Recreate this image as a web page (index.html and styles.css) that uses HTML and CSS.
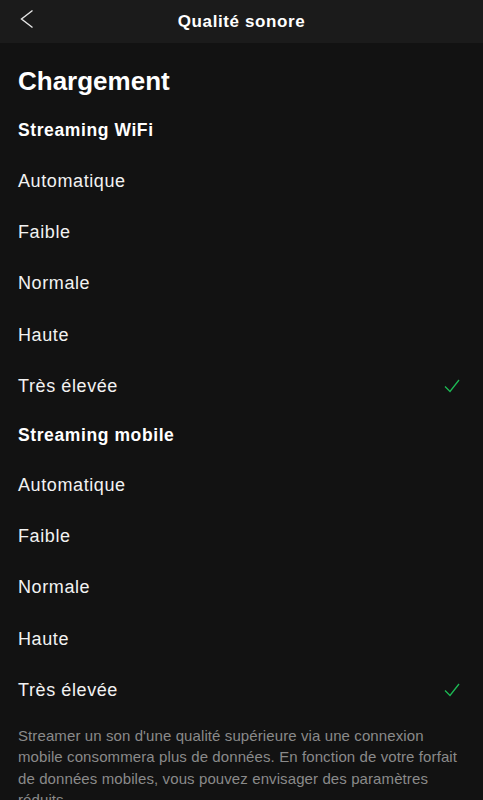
FILE: index.html
```html
<!DOCTYPE html>
<html lang="fr">

<head>
    <meta charset="UTF-8">
    <meta name="viewport" content="width=device-width, initial-scale=1.0">
    <title>Qualité sonore</title>
    <link rel="stylesheet" href="styles.css">
</head>

<body>
    <header class="topbar">
        <button class="back" aria-label="Retour">
            <svg width="14" height="20" viewBox="0 0 14 20">
                <polyline points="12.5,1.5 1.5,10 12.5,18.5" fill="none" stroke="#e6e6e6" stroke-width="1.4" />
            </svg>
        </button>
        <h2 class="topbar-title">Qualité sonore</h2>
    </header>

    <main class="content">
        <h1 class="page-title">Chargement</h1>

        <section class="group">
            <h3 class="group-title">Streaming WiFi</h3>
            <ul class="options">
                <li class="option">Automatique</li>
                <li class="option">Faible</li>
                <li class="option">Normale</li>
                <li class="option">Haute</li>
                <li class="option selected">Très élevée
                    <svg class="check" width="16" height="14" viewBox="0 0 16 14">
                        <polyline points="1,7.5 6,12.5 15,1" fill="none" stroke="#1db954" stroke-width="1.3" />
                    </svg>
                </li>
            </ul>
        </section>

        <section class="group">
            <h3 class="group-title mobile">Streaming mobile</h3>
            <ul class="options">
                <li class="option">Automatique</li>
                <li class="option">Faible</li>
                <li class="option">Normale</li>
                <li class="option">Haute</li>
                <li class="option selected">Très élevée
                    <svg class="check" width="16" height="14" viewBox="0 0 16 14">
                        <polyline points="1,7.5 6,12.5 15,1" fill="none" stroke="#1db954" stroke-width="1.3" />
                    </svg>
                </li>
            </ul>
        </section>

        <p class="note">Streamer un son d'une qualité supérieure via une connexion mobile consommera plus de données. En fonction de votre forfait de données mobiles, vous pouvez envisager des paramètres réduits.</p>
    </main>
</body>

</html>
```

FILE: styles.css
```css
body {
    margin: 0;
    padding: 0;
    background-color: #121212;
    color: #fff;
    font-family: "Liberation Sans", Arial, sans-serif;
}

.topbar {
    height: 43px;
    background: #1b1b1b;
    display: flex;
    align-items: center;
    justify-content: center;
    position: relative;
}

.back {
    position: absolute;
    left: 20px;
    top: 9px;
    background: none;
    border: none;
    padding: 0;
    width: 14px;
    height: 20px;
}

.back svg {
    display: block;
}

.topbar-title {
    margin: 0;
    font-size: 17px;
    font-weight: bold;
    letter-spacing: 0.6px;
    line-height: 40px;
}

.content {
    padding: 0 18px;
}

.page-title {
    margin: 22px 0 8px;
    font-size: 26px;
    line-height: 32px;
    font-weight: bold;
}

.group-title {
    margin: 0;
    height: 51px;
    display: flex;
    align-items: center;
    font-size: 17.5px;
    font-weight: bold;
    letter-spacing: 0.6px;
}

.group-title.mobile {
    height: 48px;
}

.options {
    list-style: none;
    margin: 0;
    padding: 0;
}

.option {
    height: 51.2px;
    display: flex;
    align-items: center;
    justify-content: space-between;
    font-size: 18px;
    letter-spacing: 0.6px;
    color: #f2f2f2;
}

.check {
    margin-right: 5px;
}

.note {
    margin: 9px 0 0;
    font-size: 15px;
    line-height: 21.5px;
    letter-spacing: 0.1px;
    color: #8a8a8a;
}
```
